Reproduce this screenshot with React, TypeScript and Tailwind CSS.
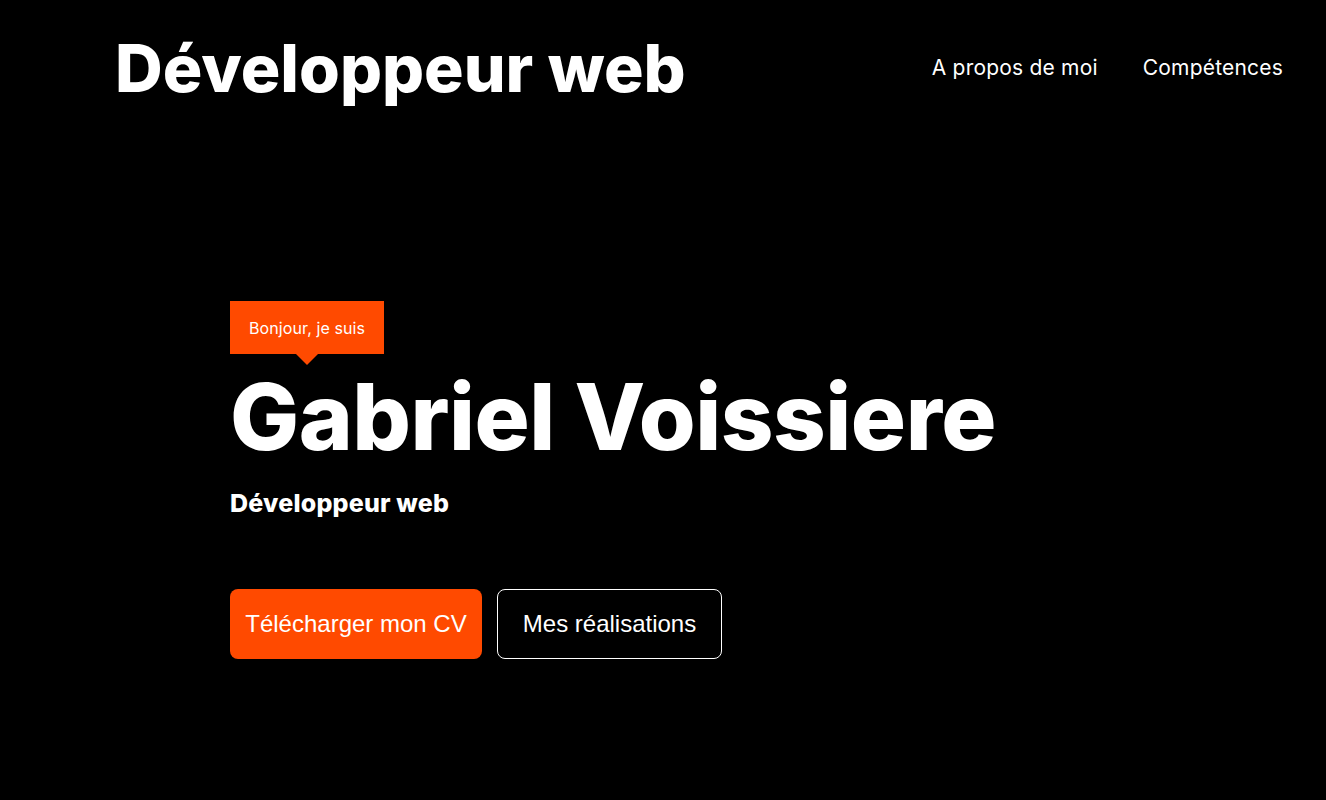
import React from "react";

export default function App() {
  return (
    <div className="min-h-[800px] w-full bg-black text-white" style={{ fontFamily: "Inter, 'Noto Sans', sans-serif" }}>
      <header className="flex items-center justify-between pl-[115px] pr-[43px] pt-[28px]">
        <h1 className="text-[66px] font-extrabold leading-[80px] tracking-[0px]">Développeur web</h1>
        <nav className="flex items-center gap-[45px] text-[21px] font-normal tracking-[0.2px]">
          <a>A propos de moi</a>
          <a>Compétences</a>
        </nav>
      </header>
      <section className="pl-[230px] pt-[193px]">
        <div className="relative inline-flex h-[53px] items-center bg-[#ff4a00] px-[19px] text-[16px] tracking-[0.1px]">
          Bonjour, je suis
          <span className="absolute left-[66px] top-[53px] h-0 w-0 border-x-[11px] border-t-[11px] border-x-transparent border-t-[#ff4a00]" />
        </div>
        <h2 className="mt-[8px] text-[92px] font-extrabold leading-[110px] tracking-[-0.5px]">Gabriel Voissiere</h2>
        <p className="mt-[16px] text-[25px] font-extrabold leading-[30px] tracking-[0.2px]">Développeur web</p>
        <div className="mt-[71px] flex gap-[15px]" style={{ fontFamily: "'Liberation Sans', Arial, sans-serif" }}>
          <button className="h-[70px] w-[252px] rounded-[8px] bg-[#ff4a00] text-[24px] text-white">Télécharger mon CV</button>
          <button className="h-[70px] w-[225px] rounded-[8px] border border-white bg-black text-[24px] text-white">Mes réalisations</button>
        </div>
      </section>
    </div>
  );
}
